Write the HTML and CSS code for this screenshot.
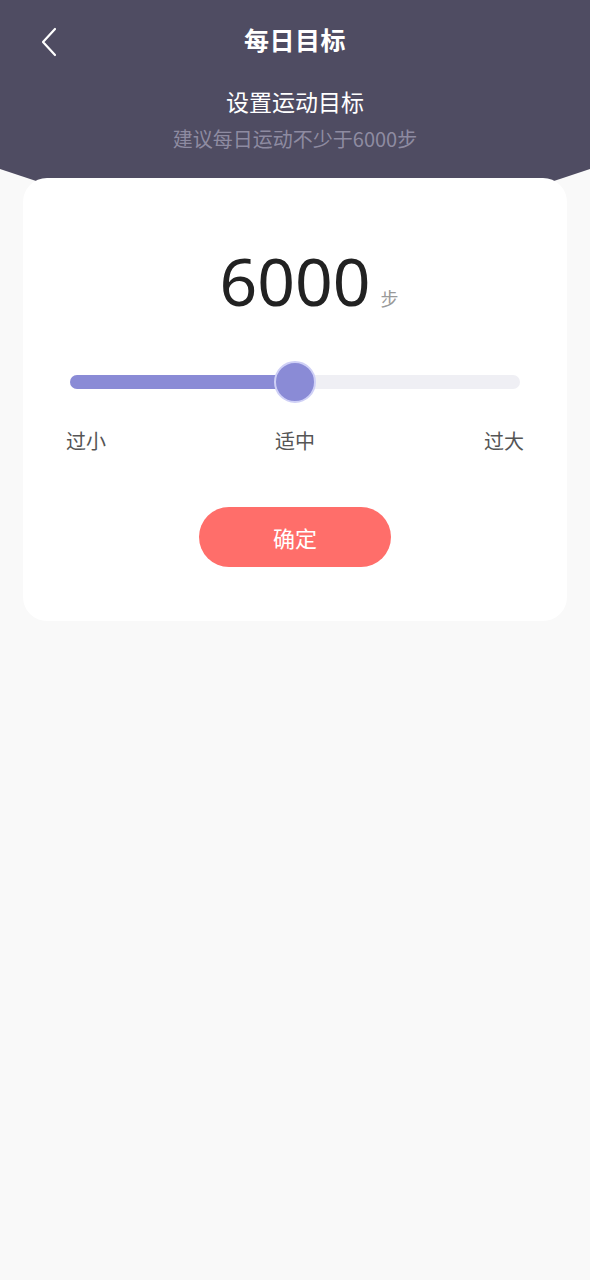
FILE: index.html
```html
<!DOCTYPE html>
<html lang="zh-CN">
<head>
  <meta charset="UTF-8">
  <meta name="viewport" content="width=device-width, initial-scale=1.0">
  <title>每日目标</title>
  <link rel="stylesheet" href="styles.css">
</head>
<body>

  <div class="header">
    <div class="nav-bar">
      <a class="back" href="#">
        <svg width="20" height="30" viewBox="0 0 20 30">
          <path d="M15 2 L3 15 L15 28" fill="none" stroke="#fff" stroke-width="2.2" stroke-linecap="round" stroke-linejoin="round"/>
        </svg>
      </a>
      <h1 class="nav-title">每日目标</h1>
    </div>
    <div class="intro">
      <h2>设置运动目标</h2>
      <p>建议每日运动不少于6000步</p>
    </div>
  </div>

  <div class="card">
    <div class="goal">
      <span class="goal-num">6000</span>
      <span class="goal-unit">步</span>
    </div>

    <div class="slider">
      <div class="track">
        <div class="track-fill" style="width: 50%;"></div>
      </div>
      <div class="thumb"></div>
    </div>

    <div class="levels">
      <span>过小</span>
      <span>适中</span>
      <span>过大</span>
    </div>

    <button class="confirm" type="button">确定</button>
  </div>

</body>
</html>
```

FILE: styles.css
```css
body {
  margin: 0;
  background-color: #f9f9f9;
  font-family: 'Noto Sans CJK SC', 'Noto Sans', sans-serif;
}

.header {
  height: 240px;
  background-color: #4f4c62;
  color: #fff;
  /* slanted bottom edge, the middle is covered by the card */
  clip-path: polygon(0 0, 100% 0, 100% 169px, 50% 267px, 0 169px);
}

.nav-bar {
  position: relative;
  height: 80px;
  display: flex;
  align-items: center;
  justify-content: center;
}

.back {
  position: absolute;
  left: 40px;
  top: 27px;
  display: block;
  line-height: 0;
}

.nav-title {
  margin: 0 0 3px;
  font-size: 25px;
  font-weight: 700;
  letter-spacing: 0.5px;
}

.intro {
  text-align: center;
  padding-top: 4px;
}

.intro h2 {
  margin: 0;
  font-size: 23px;
  font-weight: 400;
  line-height: 34px;
}

.intro p {
  margin: 6px 0 0;
  font-size: 20px;
  line-height: 30px;
  color: #8e8ba1;
}

.card {
  position: relative;
  margin: -62px 23px 0;
  height: 443px;
  box-sizing: border-box;
  background-color: #fff;
  border-radius: 24px;
  padding-top: 64px;
  display: flex;
  flex-direction: column;
  align-items: center;
}

.goal {
  display: flex;
  align-items: baseline;
  padding-left: 28px;
}

.goal-num {
  font-family: 'Noto Sans', sans-serif;
  font-size: 66px;
  line-height: 76px;
  color: #222;
}

.goal-unit {
  margin-left: 10px;
  font-size: 18px;
  color: #999;
}

.slider {
  position: relative;
  width: 450px;
  height: 44px;
  margin-top: 42px;
  display: flex;
  align-items: center;
}

.track {
  width: 100%;
  height: 14px;
  border-radius: 7px;
  background-color: #efeff4;
  overflow: hidden;
}

.track-fill {
  height: 100%;
  background-color: #8a8bd6;
}

.thumb {
  position: absolute;
  left: 50%;
  top: 50%;
  width: 38px;
  height: 38px;
  margin: -21px 0 0 -21px;
  border-radius: 50%;
  background-color: #8a8bd6;
  border: 2px solid #cfd0f6;
}

.levels {
  width: 458px;
  margin-top: 23px;
  display: flex;
  justify-content: space-between;
  font-size: 20px;
  line-height: 28px;
  color: #555;
}

.confirm {
  margin-top: 52px;
  width: 192px;
  height: 60px;
  border: none;
  border-radius: 30px;
  background-color: #ff6e6a;
  color: #fff;
  font-family: inherit;
  font-size: 22px;
  cursor: pointer;
}
```
